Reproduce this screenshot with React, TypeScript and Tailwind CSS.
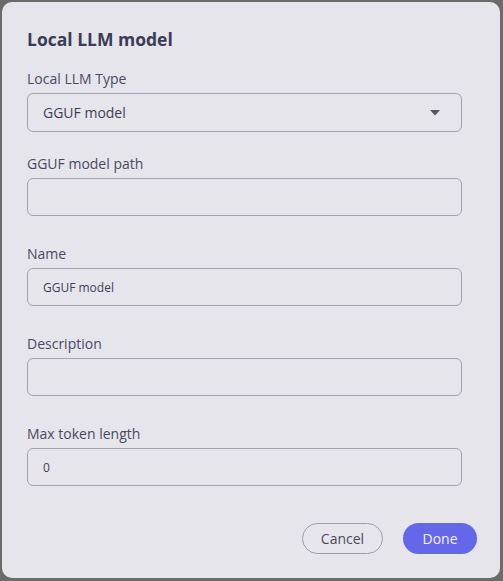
import React from 'react';

const Field: React.FC<{ label: string; value?: string; small?: boolean; className?: string }> = ({
  label,
  value,
  small,
  className,
}) => (
  <div className={`flex flex-col ${className ?? ''}`}>
    <label className="text-[14px] leading-[20px] text-[#4a4a5e]">{label}</label>
    <input
      readOnly
      value={value ?? ''}
      className={`mt-[4px] h-[38px] w-[435px] rounded-[6px] border border-[#a2a1b0] bg-transparent px-[15px] text-[#3f3f52] outline-none ${small ? 'text-[12px]' : 'text-[14px]'}`}
    />
  </div>
);

const App: React.FC = () => {
  return (
    <div className="h-[581px] w-[503px] bg-[#6b6b6b] pl-[2px] pt-[2px] font-['Open_Sans',sans-serif]">
      <div className="flex h-[576px] w-[498px] flex-col rounded-[10px] bg-[#e6e5ec] pl-[25px] pt-[23px]">
        <h1 className="text-[17.5px] font-bold leading-[28px] text-[#3b3b55]">Local LLM model</h1>

        <div className="mt-[16px] flex flex-col">
          <div className="flex flex-col">
            <label className="text-[14px] leading-[20px] text-[#4a4a5e]">Local LLM Type</label>
            <div className="mt-[4px] flex h-[39px] w-[435px] items-center justify-between rounded-[6px] border border-[#a2a1b0] px-[15px]">
              <span className="text-[14px] text-[#3f3f52]">GGUF model</span>
              <svg width="10" height="6" viewBox="0 0 10 6" className="mr-[6px]">
                <path d="M0 0h10L5 5.5z" fill="#555560" />
              </svg>
            </div>
          </div>
          <Field label="GGUF model path" className="mt-[22px]" />
          <Field label="Name" value="GGUF model" small className="mt-[28px]" />
          <Field label="Description" className="mt-[28px]" />
          <Field label="Max token length" value="0" small className="mt-[28px]" />
        </div>

        <div className="mt-[37px] flex w-[450px] justify-end gap-[20px]">
          <button className="h-[31px] w-[81px] rounded-full border border-[#9e9dac] text-[14px] text-[#4a4a5e]">
            Cancel
          </button>
          <button className="h-[31px] w-[74px] rounded-full bg-[#6467e9] text-[14px] text-[#f2f2ff]">
            Done
          </button>
        </div>
      </div>
    </div>
  );
};

export default App;
